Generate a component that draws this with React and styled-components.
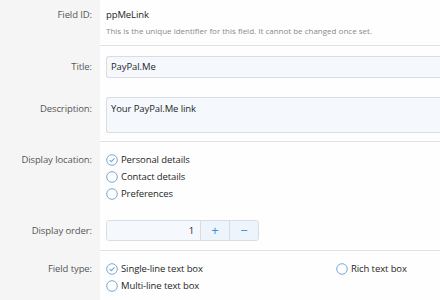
import React from 'react';
import styled, { createGlobalStyle } from 'styled-components';

const GlobalStyle = createGlobalStyle`
  html, body {
    margin: 0;
    padding: 0;
    background: #fefefe;
    overflow: hidden;
  }
  body {
    font-family: "Segoe UI", "Open Sans", sans-serif;
    font-size: 9.5px;
    letter-spacing: -0.1px;
    color: #1e1e1e;
  }
`;

const Form = styled.div`
  width: 100%;
  display: flex;
  flex-direction: column;
`;

const Row = styled.div`
  display: grid;
  grid-template-columns: 100px 1fr;
`;

const Label = styled.div`
  background: #f5f5f5;
  color: #555;
  text-align: right;
  padding: ${(p) => p.$top}px 8px 0 0;
  line-height: ${(p) => p.$lh}px;
`;

const Field = styled.div`
  padding: ${(p) => p.$pad};
  padding-left: 6px;
  border-bottom: ${(p) => (p.$divider ? '1px solid #e2e2e2' : 'none')};
`;

const Value = styled.div`
  line-height: 18px;
`;

const Hint = styled.div`
  line-height: 14px;
  font-size: 8px;
  letter-spacing: 0;
  color: #8a8a8a;
`;

const Input = styled.div`
  box-sizing: border-box;
  height: ${(p) => p.$h}px;
  background: #f5f9fd;
  border: 1px solid #d8dde3;
  border-right: none;
  border-radius: 3px 0 0 3px;
  padding: ${(p) => (p.$multi ? '2px 4px' : '0 4px')};
  line-height: ${(p) => (p.$multi ? '18px' : '20px')};
`;

const RadioList = styled.div`
  display: grid;
  grid-template-columns: ${(p) => p.$cols || '1fr'};
`;

const RadioItem = styled.label`
  display: flex;
  align-items: center;
  gap: 3px;
  height: 17px;
`;

const Spinner = styled.div`
  display: flex;
  width: 153px;
  height: 21px;
  box-sizing: border-box;
  border: 1px solid #d8dde3;
  border-radius: 3px;
  overflow: hidden;
`;

const SpinInput = styled.div`
  flex: 1;
  background: #f5f9fd;
  text-align: right;
  padding-right: 6px;
  line-height: 19px;
`;

const SpinButton = styled.div`
  width: 28px;
  background: #edf4fb;
  border-left: 1px solid #d8dde3;
  display: flex;
  align-items: center;
  justify-content: center;
  color: #3f8fd4;
  font-size: 13px;
  line-height: 19px;
`;

function RadioIcon({ checked }) {
  return (
    <svg width="12" height="12" viewBox="0 0 12 12">
      <circle cx="6" cy="6" r="5.3" fill="none" stroke="#7aa8d8" strokeWidth="1" />
      {checked && (
        <path d="M3.6 6.1 L5.3 7.7 L8.5 4.4" fill="none" stroke="#7aa8d8" strokeWidth="1.1" />
      )}
    </svg>
  );
}

function Radio({ checked, children }) {
  return (
    <RadioItem>
      <RadioIcon checked={checked} />
      {children}
    </RadioItem>
  );
}

export default function App() {
  return (
    <Form>
      <GlobalStyle />
      <Row>
        <Label $top={6} $lh={18}>Field ID:</Label>
        <Field $pad="6px 0 7px" $divider>
          <Value>ppMeLink</Value>
          <Hint>This is the unique identifier for this field. It cannot be changed once set.</Hint>
        </Field>
      </Row>
      <Row>
        <Label $top={10} $lh={22}>Title:</Label>
        <Field $pad="10px 0 9px">
          <Input $h={22}>PayPal.Me</Input>
        </Field>
      </Row>
      <Row>
        <Label $top={13} $lh={18}>Description:</Label>
        <Field $pad="10px 0 8px" $divider>
          <Input $h={36} $multi>Your PayPal.Me link</Input>
        </Field>
      </Row>
      <Row>
        <Label $top={9} $lh={17}>Display location:</Label>
        <Field $pad="9px 0 8px">
          <RadioList>
            <Radio checked>Personal details</Radio>
            <Radio>Contact details</Radio>
            <Radio>Preferences</Radio>
          </RadioList>
        </Field>
      </Row>
      <Row>
        <Label $top={10} $lh={21}>Display order:</Label>
        <Field $pad="10px 0 9px" $divider>
          <Spinner>
            <SpinInput>1</SpinInput>
            <SpinButton>+</SpinButton>
            <SpinButton>−</SpinButton>
          </Spinner>
        </Field>
      </Row>
      <Row>
        <Label $top={9} $lh={17}>Field type:</Label>
        <Field $pad="9px 0 10px">
          <RadioList $cols="230px 1fr">
            <Radio checked>Single-line text box</Radio>
            <Radio>Rich text box</Radio>
            <Radio>Multi-line text box</Radio>
          </RadioList>
        </Field>
      </Row>
    </Form>
  );
}
